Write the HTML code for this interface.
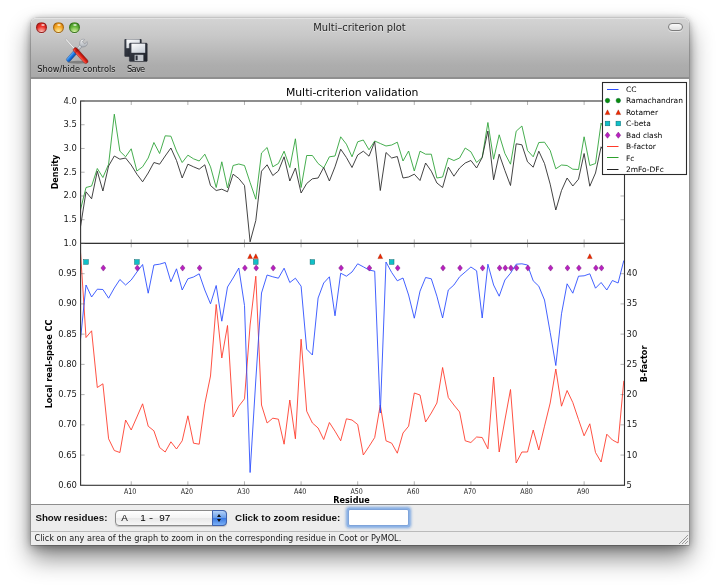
<!DOCTYPE html>
<html><head><meta charset="utf-8"><title>Multi-criterion plot</title>
<style>
html,body{margin:0;padding:0;background:#fff;}
body{width:720px;height:587px;position:relative;overflow:hidden;font-family:"Liberation Sans",sans-serif;}
.win{position:absolute;left:31px;top:18px;width:657.9px;height:527px;border-radius:5px 5px 0 0;background:#fff;
 box-shadow:0 .2px 0 .45px rgba(0,0,0,.27),0 13px 24px rgba(0,0,0,.47),0 3px 11px rgba(0,0,0,.28),0 0 6px rgba(0,0,0,.14);}
.tb{position:absolute;left:0;top:0;width:657.9px;height:61px;border-radius:5px 5px 0 0;
 background:linear-gradient(#d4d4d4,#c8c8c8 30%,#adadad 80%,#a9a9a9);box-shadow:inset 0 1px 0 rgba(255,255,255,.35);border-bottom:2px solid #8f8f8f;box-sizing:border-box;}
.title{position:absolute;left:0;top:3px;width:657px;text-align:center;font-family:"DejaVu Sans","Liberation Sans",sans-serif;font-size:9.9px;color:#222;line-height:14px;text-shadow:0 1px 0 rgba(255,255,255,.45);}
.tl{position:absolute;top:3.8px;width:11px;height:11px;border-radius:50%;box-sizing:border-box;box-shadow:0 .5px 0 rgba(255,255,255,.5);}
.tl.r{left:5.4px;background:radial-gradient(ellipse 75% 60% at 50% 100%,#ffc8c0 0%,rgba(255,180,170,0) 100%),radial-gradient(circle at 50% 55%,#f43c34 0%,#e62c24 50%,#b01a16 85%,#8c1210 100%);border:.5px solid rgba(110,20,20,.55);}
.tl.y{left:21.5px;background:radial-gradient(ellipse 75% 60% at 50% 100%,#fff2a8 0%,rgba(255,240,160,0) 100%),radial-gradient(circle at 50% 55%,#f8b030 0%,#f0a020 50%,#c87810 85%,#9a5808 100%);border:.5px solid rgba(120,70,10,.55);}
.tl.g{left:37.5px;background:radial-gradient(ellipse 75% 60% at 50% 100%,#dcf8a8 0%,rgba(210,245,160,0) 100%),radial-gradient(circle at 50% 55%,#70bc40 0%,#5cac34 50%,#3a8420 85%,#2a6412 100%);border:.5px solid rgba(40,90,20,.55);}
.tl:after{content:"";position:absolute;left:3.2px;top:.9px;width:4px;height:2.2px;border-radius:50%;background:radial-gradient(ellipse,rgba(255,255,255,.95),rgba(255,255,255,.2));}
.pill{position:absolute;left:636.8px;top:5px;width:15.5px;height:8px;border-radius:4px;border:1px solid #7c7c7c;background:linear-gradient(#fafafa,#e0e0e0);box-sizing:border-box;box-shadow:0 1px 0 rgba(255,255,255,.5);}
.tbl{position:absolute;top:46px;font-family:"DejaVu Sans","Liberation Sans",sans-serif;font-size:8.25px;color:#111;white-space:nowrap;line-height:11px;text-shadow:0 1px 0 rgba(255,255,255,.35);}
.ctrl{position:absolute;left:0;top:486px;width:657.9px;height:41px;background:#ededed;border-top:1px solid #8e8e8e;box-sizing:border-box;}
.stat{position:absolute;left:0;top:513px;width:657.9px;height:14px;border-top:1px solid #bababa;box-sizing:border-box;font-family:"DejaVu Sans","Liberation Sans",sans-serif;font-size:8.17px;line-height:12px;color:#1a1a1a;padding-left:3.6px;white-space:nowrap;}
.lbl{position:absolute;font-weight:bold;font-size:9.75px;color:#111;white-space:nowrap;line-height:14px;}
.pop{position:absolute;left:84px;top:492.3px;width:111.5px;height:15.5px;border-radius:4px;border:1px solid #8a8a8a;box-sizing:border-box;background:linear-gradient(#ffffff,#f4f4f4 48%,#e8e8e8 52%,#f6f6f6);font-size:9.9px;line-height:13.8px;white-space:pre;padding-left:7.5px;color:#000;box-shadow:0 1px 1px rgba(0,0,0,.18);}
.pop i{position:absolute;right:-1px;top:-1px;width:14.5px;height:15.5px;border-radius:0 4px 4px 0;border:1px solid #3f62ad;box-sizing:border-box;background:linear-gradient(#b4d2f8,#6a9eea 48%,#3a78e0 52%,#7ab0f6);}
.pop i:before{content:"";position:absolute;left:3.6px;top:2.6px;border:2.6px solid transparent;border-top:0;border-bottom:3px solid #111;}
.pop i:after{content:"";position:absolute;left:3.6px;top:7.8px;border:2.6px solid transparent;border-bottom:0;border-top:3px solid #111;}
.tf{position:absolute;left:317px;top:491.3px;width:60.5px;height:16.4px;box-sizing:border-box;background:#fff;border:1px solid #7fa4da;box-shadow:0 0 0 1.5px #8db3e6,0 0 2px 2.2px rgba(125,168,226,.5);border-radius:2px;}
.grip{position:absolute;right:1px;bottom:1px;width:9px;height:9px;background:linear-gradient(135deg,transparent 0 6.2px,#9a9a9a 6.2px 6.9px,transparent 6.9px 8.3px,#9a9a9a 8.3px 9px,transparent 9px 10.4px,#9a9a9a 10.4px 11.1px,transparent 11.1px);}
svg.plot{position:absolute;left:0;top:0;}
svg.ic{position:absolute;left:0;top:0;}
</style></head><body>
<div id="root" style="position:absolute;left:0;top:0;width:720px;height:587px;will-change:transform;">
<div class="win">
 <div class="tb">
  <div class="tl r"></div><div class="tl y"></div><div class="tl g"></div>
  <div class="title">Multi–criterion plot</div>
  <div class="pill"></div>
  <div class="tbl" style="left:6.2px">Show/hide controls</div>
  <div class="tbl" style="left:96px;letter-spacing:-.7px">Save</div>
 </div>
 <div class="ctrl"></div>
 <div class="lbl" style="left:4.4px;top:492.9px">Show residues:</div>
 <div class="pop"><span style="position:absolute;left:5.2px">A</span><span style="position:absolute;left:24.2px">1</span><span style="position:absolute;left:32.8px;transform:scaleX(1.25);transform-origin:0 0">-</span><span style="position:absolute;left:43.2px">97</span><i></i></div>
 <div class="lbl" style="left:204px;top:492.9px;font-size:9.9px">Click to zoom residue:</div>
 <div class="tf"></div>
 <div class="stat">Click on any area of the graph to zoom in on the corresponding residue in Coot or PyMOL.</div>
 <div class="grip"></div>
</div>
<svg class="ic" width="720" height="587" viewBox="0 0 720 587">
 <defs>
  <linearGradient id="gred" x1="0" y1="0" x2="1" y2="0"><stop offset="0" stop-color="#ff6a5a"/><stop offset=".5" stop-color="#e02418"/><stop offset="1" stop-color="#a01008"/></linearGradient>
  <linearGradient id="gblu" x1="0" y1="0" x2="1" y2="0"><stop offset="0" stop-color="#6ab4ff"/><stop offset=".5" stop-color="#1c78e0"/><stop offset="1" stop-color="#0a4aa8"/></linearGradient>
  <linearGradient id="gmet" x1="0" y1="0" x2="1" y2="1"><stop offset="0" stop-color="#ffffff"/><stop offset="1" stop-color="#9aa0a8"/></linearGradient>
  <linearGradient id="gflop" x1="0" y1="0" x2="1" y2="1"><stop offset="0" stop-color="#3c414c"/><stop offset="1" stop-color="#1c2028"/></linearGradient>
  <linearGradient id="glab" x1="0" y1="0" x2=".6" y2="1"><stop offset="0" stop-color="#ffffff"/><stop offset="1" stop-color="#ccd2da"/></linearGradient>
 </defs>
 <!-- tools icon -->
 <ellipse cx="78" cy="62.2" rx="10.5" ry="1.5" fill="rgba(0,0,0,.28)"/>
 <!-- wrench: blue handle lower-left, head upper-right -->
 <g transform="translate(77.6,49.6) rotate(42)">
  <rect x="-2.1" y="-.5" width="4.2" height="16" rx="2" fill="url(#gblu)" stroke="#0a3a88" stroke-width=".4"/>
  <rect x="-1.4" y="-6.5" width="2.8" height="6.6" fill="url(#gmet)" stroke="#70767e" stroke-width=".4"/>
  <path d="M-3.3 -7a3.5 3.5 0 0 1 1.7 -5.2v3.2h3.2v-3.2a3.5 3.5 0 0 1 1.7 5.2a3.5 3.5 0 0 1 -6.6 0z" fill="url(#gmet)" stroke="#70767e" stroke-width=".4"/>
 </g>
 <!-- screwdriver: red handle lower-right, shaft upper-left -->
 <g transform="translate(76.3,50.8) rotate(-42)">
  <rect x="-.7" y="-15.5" width="1.4" height="13" fill="#f4f4f4" stroke="#8a8a8a" stroke-width=".35"/>
  <rect x="-2.2" y="-3.4" width="4.4" height="19.6" rx="2" fill="url(#gred)" stroke="#7a0c06" stroke-width=".4"/>
  <path d="M-2.2 -.4h4.4M-2.2 .8h4.4" stroke="#6a0a06" stroke-width=".45"/>
 </g>
 <!-- save icon: two floppies -->
 <g>
  <rect x="124.4" y="39" width="17.2" height="17.8" rx="1" fill="url(#gflop)"/>
  <rect x="126.4" y="39.4" width="13.4" height="8.8" fill="url(#glab)"/>
  <rect x="129.3" y="43" width="18" height="18.6" rx="1.2" fill="url(#gflop)" stroke="#1c2028" stroke-width=".3"/>
  <rect x="131.4" y="43.6" width="13.8" height="9.2" fill="url(#glab)"/>
  <rect x="134.6" y="54.8" width="8.8" height="6.2" fill="#c4c8ce"/>
  <rect x="135.6" y="55.6" width="2" height="4.6" fill="#2b303a"/>
 </g>
</svg>
<svg class="plot" width="720" height="587" viewBox="0 0 720 587">
<defs><clipPath id="c1"><rect x="80.6" y="101.0" width="543.9" height="142.4"/></clipPath><clipPath id="c2"><rect x="80.6" y="243.4" width="543.9" height="241.9"/></clipPath></defs>
<g fill="none" stroke-width=".88" stroke-linejoin="round">
<polyline clip-path="url(#c1)" stroke="#2da338" points="80.3,210.5 86.0,187.5 91.6,186.0 97.3,168.5 102.9,177.5 108.6,164.2 114.3,114.2 119.9,151.2 125.6,156.8 131.2,148.8 136.9,171.0 142.6,166.8 148.2,158.0 153.9,142.5 159.6,153.5 165.2,135.8 170.9,136.2 176.5,151.0 182.2,162.5 187.9,155.2 193.5,158.8 199.2,161.0 204.8,154.2 210.5,166.8 216.2,187.5 221.8,161.8 227.5,188.0 233.1,165.5 238.8,164.0 244.5,165.5 250.1,182.5 255.8,199.2 261.5,153.0 267.1,147.5 272.8,166.8 278.4,163.5 284.1,151.2 289.8,167.5 295.4,138.8 301.1,187.5 306.7,155.5 312.4,155.5 318.1,163.5 323.7,168.0 329.4,156.8 335.0,156.0 340.7,136.8 346.4,144.2 352.0,156.8 357.7,141.8 363.3,140.0 369.0,149.8 374.7,141.0 380.3,143.5 386.0,146.0 391.7,145.0 397.3,142.2 403.0,161.0 408.6,151.0 414.3,171.0 420.0,151.2 425.6,154.2 431.3,154.2 436.9,178.0 442.6,177.0 448.3,158.0 453.9,160.5 459.6,158.0 465.2,148.0 470.9,151.8 476.6,162.5 482.2,157.5 487.9,122.5 493.6,159.2 499.2,134.8 504.9,153.5 510.5,164.2 516.2,131.2 521.9,126.0 527.5,150.5 533.2,156.8 538.8,142.5 544.5,142.2 550.2,150.5 555.8,168.8 561.5,165.0 567.1,165.5 572.8,169.2 578.5,169.5 584.1,136.8 589.8,165.5 595.5,163.5 601.1,123.0 606.8,135.5 612.4,148.0 618.1,143.0 623.8,140.5"/>
<polyline clip-path="url(#c1)" stroke="#2a2a2a" points="80.3,228.0 86.0,191.8 91.6,198.8 97.3,171.2 102.9,191.0 108.6,166.0 114.3,156.0 119.9,159.2 125.6,158.0 131.2,165.0 136.9,174.2 142.6,181.8 148.2,173.0 153.9,162.5 159.6,164.2 165.2,156.0 170.9,148.0 176.5,160.5 182.2,178.0 187.9,164.2 193.5,166.8 199.2,169.2 204.8,164.8 210.5,185.5 216.2,190.5 221.8,189.2 227.5,191.8 233.1,174.2 238.8,178.5 244.5,185.5 250.1,241.8 255.8,220.5 261.5,171.2 267.1,164.8 272.8,175.5 278.4,171.0 284.1,156.8 289.8,181.0 295.4,168.0 301.1,193.0 306.7,183.5 312.4,178.8 318.1,178.0 323.7,167.5 329.4,181.0 335.0,166.8 340.7,149.2 346.4,157.5 352.0,167.5 357.7,155.0 363.3,151.2 369.0,156.2 374.7,141.8 380.3,190.5 386.0,152.5 391.7,158.0 397.3,156.5 403.0,178.0 408.6,177.0 414.3,174.2 420.0,180.5 425.6,163.0 431.3,171.2 436.9,183.0 442.6,187.5 448.3,167.2 453.9,176.2 459.6,168.0 465.2,163.0 470.9,160.5 476.6,168.0 482.2,157.5 487.9,131.0 493.6,179.8 499.2,154.2 504.9,170.5 510.5,185.5 516.2,143.8 521.9,144.8 527.5,161.8 533.2,167.2 538.8,151.2 544.5,163.5 550.2,184.2 555.8,210.0 561.5,190.5 567.1,178.0 572.8,186.0 578.5,179.2 584.1,153.5 589.8,186.2 595.5,173.0 601.1,146.8 606.8,155.5 612.4,163.0 618.1,158.0 623.8,155.5"/>
<polyline clip-path="url(#c2)" stroke="#ff3a2a" points="80.3,249.0 86.0,337.5 91.6,330.8 97.3,387.5 102.9,383.8 108.6,438.8 114.3,450.5 119.9,452.5 125.6,420.0 131.2,430.0 136.9,417.0 142.6,403.8 148.2,426.2 153.9,430.8 159.6,447.5 165.2,452.0 170.9,441.8 176.5,449.0 182.2,440.8 187.9,415.8 193.5,443.2 199.2,444.2 204.8,403.8 210.5,376.0 216.2,304.5 221.8,358.0 227.5,325.5 233.1,417.0 238.8,406.2 244.5,398.8 250.1,325.0 255.8,276.2 261.5,405.0 267.1,423.0 272.8,418.2 278.4,419.2 284.1,444.2 289.8,400.0 295.4,438.8 301.1,339.2 306.7,411.2 312.4,423.0 318.1,428.0 323.7,439.5 329.4,422.5 335.0,431.2 340.7,440.8 346.4,418.8 352.0,420.0 357.7,424.5 363.3,455.0 369.0,446.5 374.7,437.5 380.3,405.0 386.0,440.8 391.7,443.2 397.3,453.2 403.0,433.0 408.6,426.2 414.3,393.0 420.0,395.0 425.6,422.0 431.3,413.0 436.9,403.0 442.6,367.5 448.3,397.5 453.9,405.0 459.6,412.0 465.2,440.8 470.9,442.5 476.6,437.0 482.2,437.5 487.9,448.8 493.6,377.0 499.2,452.0 504.9,420.0 510.5,389.5 516.2,463.0 521.9,452.0 527.5,452.0 533.2,430.0 538.8,450.0 544.5,426.2 550.2,403.0 555.8,369.0 561.5,406.2 567.1,390.5 572.8,402.5 578.5,419.5 584.1,435.8 589.8,423.8 595.5,452.5 601.1,462.0 606.8,434.2 612.4,440.0 618.1,443.0 623.8,380.8"/>
<polyline clip-path="url(#c2)" stroke="#2a4cff" points="80.3,341.2 86.0,285.0 91.6,297.0 97.3,289.2 102.9,289.5 108.6,298.2 114.3,288.0 119.9,279.5 125.6,285.0 131.2,280.0 136.9,272.0 142.6,264.5 148.2,293.2 153.9,265.0 159.6,264.2 165.2,262.5 170.9,281.8 176.5,268.8 182.2,290.0 187.9,278.8 193.5,277.0 199.2,273.8 204.8,290.0 210.5,303.8 216.2,285.5 221.8,321.2 227.5,287.0 233.1,278.0 238.8,268.0 244.5,305.5 250.1,472.5 255.8,380.0 261.5,293.0 267.1,275.0 272.8,276.8 278.4,278.2 284.1,268.2 289.8,282.5 295.4,278.2 301.1,286.2 306.7,349.2 312.4,355.0 318.1,298.0 323.7,283.0 329.4,276.8 335.0,315.8 340.7,273.2 346.4,276.2 352.0,272.0 357.7,263.8 363.3,266.8 369.0,270.0 374.7,271.2 380.3,413.0 386.0,262.0 391.7,272.5 397.3,280.8 403.0,278.0 408.6,295.0 414.3,318.2 420.0,291.2 425.6,277.5 431.3,278.8 436.9,296.2 442.6,318.0 448.3,290.0 453.9,285.0 459.6,276.8 465.2,272.0 470.9,267.0 476.6,270.8 482.2,318.0 487.9,264.2 493.6,285.0 499.2,296.2 504.9,280.0 510.5,273.2 516.2,264.2 521.9,263.8 527.5,265.0 533.2,280.8 538.8,286.2 544.5,300.0 550.2,332.5 555.8,365.5 561.5,313.8 567.1,283.8 572.8,293.2 578.5,276.2 584.1,275.8 589.8,273.8 595.5,288.2 601.1,282.5 606.8,290.0 612.4,280.5 618.1,283.0 623.8,260.5"/>
</g>
<path d="M250.1 253.8l2.4 4.8h-4.8z" fill="#f02800" stroke="#8a1a00" stroke-width=".35"/>
<path d="M255.8 253.8l2.4 4.8h-4.8z" fill="#f02800" stroke="#8a1a00" stroke-width=".35"/>
<path d="M380.3 253.8l2.4 4.8h-4.8z" fill="#f02800" stroke="#8a1a00" stroke-width=".35"/>
<path d="M589.8 253.8l2.4 4.8h-4.8z" fill="#f02800" stroke="#8a1a00" stroke-width=".35"/>
<rect x="83.7" y="259.7" width="4.6" height="4.6" fill="#10c0c8" stroke="#0a6a70" stroke-width=".5"/>
<rect x="134.6" y="259.7" width="4.6" height="4.6" fill="#10c0c8" stroke="#0a6a70" stroke-width=".5"/>
<rect x="253.5" y="259.7" width="4.6" height="4.6" fill="#10c0c8" stroke="#0a6a70" stroke-width=".5"/>
<rect x="310.1" y="259.7" width="4.6" height="4.6" fill="#10c0c8" stroke="#0a6a70" stroke-width=".5"/>
<rect x="389.4" y="259.7" width="4.6" height="4.6" fill="#10c0c8" stroke="#0a6a70" stroke-width=".5"/>
<path d="M103.3 264.9l2.4 3.1l-2.4 3.1l-2.4 -3.1z" fill="#b820c0" stroke="#6a1070" stroke-width=".4"/>
<path d="M137.3 264.9l2.4 3.1l-2.4 3.1l-2.4 -3.1z" fill="#b820c0" stroke="#6a1070" stroke-width=".4"/>
<path d="M182.6 264.9l2.4 3.1l-2.4 3.1l-2.4 -3.1z" fill="#b820c0" stroke="#6a1070" stroke-width=".4"/>
<path d="M199.6 264.9l2.4 3.1l-2.4 3.1l-2.4 -3.1z" fill="#b820c0" stroke="#6a1070" stroke-width=".4"/>
<path d="M244.9 264.9l2.4 3.1l-2.4 3.1l-2.4 -3.1z" fill="#b820c0" stroke="#6a1070" stroke-width=".4"/>
<path d="M256.2 264.9l2.4 3.1l-2.4 3.1l-2.4 -3.1z" fill="#b820c0" stroke="#6a1070" stroke-width=".4"/>
<path d="M273.2 264.9l2.4 3.1l-2.4 3.1l-2.4 -3.1z" fill="#b820c0" stroke="#6a1070" stroke-width=".4"/>
<path d="M341.1 264.9l2.4 3.1l-2.4 3.1l-2.4 -3.1z" fill="#b820c0" stroke="#6a1070" stroke-width=".4"/>
<path d="M369.4 264.9l2.4 3.1l-2.4 3.1l-2.4 -3.1z" fill="#b820c0" stroke="#6a1070" stroke-width=".4"/>
<path d="M397.7 264.9l2.4 3.1l-2.4 3.1l-2.4 -3.1z" fill="#b820c0" stroke="#6a1070" stroke-width=".4"/>
<path d="M443.0 264.9l2.4 3.1l-2.4 3.1l-2.4 -3.1z" fill="#b820c0" stroke="#6a1070" stroke-width=".4"/>
<path d="M460.0 264.9l2.4 3.1l-2.4 3.1l-2.4 -3.1z" fill="#b820c0" stroke="#6a1070" stroke-width=".4"/>
<path d="M482.6 264.9l2.4 3.1l-2.4 3.1l-2.4 -3.1z" fill="#b820c0" stroke="#6a1070" stroke-width=".4"/>
<path d="M499.6 264.9l2.4 3.1l-2.4 3.1l-2.4 -3.1z" fill="#b820c0" stroke="#6a1070" stroke-width=".4"/>
<path d="M505.3 264.9l2.4 3.1l-2.4 3.1l-2.4 -3.1z" fill="#b820c0" stroke="#6a1070" stroke-width=".4"/>
<path d="M510.9 264.9l2.4 3.1l-2.4 3.1l-2.4 -3.1z" fill="#b820c0" stroke="#6a1070" stroke-width=".4"/>
<path d="M516.6 264.9l2.4 3.1l-2.4 3.1l-2.4 -3.1z" fill="#b820c0" stroke="#6a1070" stroke-width=".4"/>
<path d="M527.9 264.9l2.4 3.1l-2.4 3.1l-2.4 -3.1z" fill="#b820c0" stroke="#6a1070" stroke-width=".4"/>
<path d="M550.6 264.9l2.4 3.1l-2.4 3.1l-2.4 -3.1z" fill="#b820c0" stroke="#6a1070" stroke-width=".4"/>
<path d="M567.5 264.9l2.4 3.1l-2.4 3.1l-2.4 -3.1z" fill="#b820c0" stroke="#6a1070" stroke-width=".4"/>
<path d="M578.9 264.9l2.4 3.1l-2.4 3.1l-2.4 -3.1z" fill="#b820c0" stroke="#6a1070" stroke-width=".4"/>
<path d="M595.9 264.9l2.4 3.1l-2.4 3.1l-2.4 -3.1z" fill="#b820c0" stroke="#6a1070" stroke-width=".4"/>
<path d="M601.5 264.9l2.4 3.1l-2.4 3.1l-2.4 -3.1z" fill="#b820c0" stroke="#6a1070" stroke-width=".4"/>
<g fill="none" stroke="#333" stroke-width="1.1">
<rect x="80.6" y="101.0" width="543.9" height="142.4"/>
<rect x="80.6" y="243.4" width="543.9" height="241.9"/>
<path stroke="#555" stroke-width=".45" d="M131.25 101.0v4M131.25 243.4v-4M131.25 243.4v4M131.25 485.3v-4M187.86 101.0v4M187.86 243.4v-4M187.86 243.4v4M187.86 485.3v-4M244.47 101.0v4M244.47 243.4v-4M244.47 243.4v4M244.47 485.3v-4M301.08 101.0v4M301.08 243.4v-4M301.08 243.4v4M301.08 485.3v-4M357.69 101.0v4M357.69 243.4v-4M357.69 243.4v4M357.69 485.3v-4M414.30 101.0v4M414.30 243.4v-4M414.30 243.4v4M414.30 485.3v-4M470.91 101.0v4M470.91 243.4v-4M470.91 243.4v4M470.91 485.3v-4M527.52 101.0v4M527.52 243.4v-4M527.52 243.4v4M527.52 485.3v-4M584.13 101.0v4M584.13 243.4v-4M584.13 243.4v4M584.13 485.3v-4M80.6 101.00h4M624.5 101.00h-4M80.6 124.74h4M624.5 124.74h-4M80.6 148.48h4M624.5 148.48h-4M80.6 172.22h4M624.5 172.22h-4M80.6 195.97h4M624.5 195.97h-4M80.6 219.71h4M624.5 219.71h-4M80.6 243.45h4M624.5 243.45h-4M80.6 243.45h4M624.5 243.45h-4M80.6 273.68h4M624.5 273.68h-4M80.6 303.91h4M624.5 303.91h-4M80.6 334.14h4M624.5 334.14h-4M80.6 364.38h4M624.5 364.38h-4M80.6 394.61h4M624.5 394.61h-4M80.6 424.84h4M624.5 424.84h-4M80.6 455.07h4M624.5 455.07h-4M80.6 485.30h4M624.5 485.30h-4"/>
</g>
<g font-family="'DejaVu Sans','Liberation Sans',sans-serif" fill="#000">
<text x="352.2" y="96" font-size="10.85" text-anchor="middle">Multi-criterion validation</text>
<text x="63.52" y="104.30" font-size="9.0" fill="#1a1a1a" textLength="13.38" lengthAdjust="spacingAndGlyphs">4.0</text>
<text x="63.52" y="127.24" font-size="9.0" fill="#1a1a1a" textLength="13.38" lengthAdjust="spacingAndGlyphs">3.5</text>
<text x="63.52" y="150.98" font-size="9.0" fill="#1a1a1a" textLength="13.38" lengthAdjust="spacingAndGlyphs">3.0</text>
<text x="63.52" y="174.72" font-size="9.0" fill="#1a1a1a" textLength="13.38" lengthAdjust="spacingAndGlyphs">2.5</text>
<text x="63.52" y="198.47" font-size="9.0" fill="#1a1a1a" textLength="13.38" lengthAdjust="spacingAndGlyphs">2.0</text>
<text x="63.52" y="222.21" font-size="9.0" fill="#1a1a1a" textLength="13.38" lengthAdjust="spacingAndGlyphs">1.5</text>
<text x="63.52" y="245.95" font-size="9.0" fill="#1a1a1a" textLength="13.38" lengthAdjust="spacingAndGlyphs">1.0</text>
<text x="58.17" y="276.18" font-size="9.0" fill="#1a1a1a" textLength="18.73" lengthAdjust="spacingAndGlyphs">0.95</text>
<text x="626.60" y="276.18" font-size="9.0" fill="#1a1a1a" textLength="10.70" lengthAdjust="spacingAndGlyphs">40</text>
<text x="58.17" y="306.41" font-size="9.0" fill="#1a1a1a" textLength="18.73" lengthAdjust="spacingAndGlyphs">0.90</text>
<text x="626.60" y="306.41" font-size="9.0" fill="#1a1a1a" textLength="10.70" lengthAdjust="spacingAndGlyphs">35</text>
<text x="58.17" y="336.64" font-size="9.0" fill="#1a1a1a" textLength="18.73" lengthAdjust="spacingAndGlyphs">0.85</text>
<text x="626.60" y="336.64" font-size="9.0" fill="#1a1a1a" textLength="10.70" lengthAdjust="spacingAndGlyphs">30</text>
<text x="58.17" y="366.88" font-size="9.0" fill="#1a1a1a" textLength="18.73" lengthAdjust="spacingAndGlyphs">0.80</text>
<text x="626.60" y="366.88" font-size="9.0" fill="#1a1a1a" textLength="10.70" lengthAdjust="spacingAndGlyphs">25</text>
<text x="58.17" y="397.11" font-size="9.0" fill="#1a1a1a" textLength="18.73" lengthAdjust="spacingAndGlyphs">0.75</text>
<text x="626.60" y="397.11" font-size="9.0" fill="#1a1a1a" textLength="10.70" lengthAdjust="spacingAndGlyphs">20</text>
<text x="58.17" y="427.34" font-size="9.0" fill="#1a1a1a" textLength="18.73" lengthAdjust="spacingAndGlyphs">0.70</text>
<text x="626.60" y="427.34" font-size="9.0" fill="#1a1a1a" textLength="10.70" lengthAdjust="spacingAndGlyphs">15</text>
<text x="58.17" y="457.57" font-size="9.0" fill="#1a1a1a" textLength="18.73" lengthAdjust="spacingAndGlyphs">0.65</text>
<text x="626.60" y="457.57" font-size="9.0" fill="#1a1a1a" textLength="10.70" lengthAdjust="spacingAndGlyphs">10</text>
<text x="58.17" y="487.80" font-size="9.0" fill="#1a1a1a" textLength="18.73" lengthAdjust="spacingAndGlyphs">0.60</text>
<text x="626.60" y="487.80" font-size="9.0" fill="#1a1a1a" textLength="5.35" lengthAdjust="spacingAndGlyphs">5</text>
<text x="124.0" y="493.7" font-size="7.8" fill="#222" textLength="12.4" lengthAdjust="spacingAndGlyphs">A10</text>
<text x="180.7" y="493.7" font-size="7.8" fill="#222" textLength="12.4" lengthAdjust="spacingAndGlyphs">A20</text>
<text x="237.3" y="493.7" font-size="7.8" fill="#222" textLength="12.4" lengthAdjust="spacingAndGlyphs">A30</text>
<text x="293.9" y="493.7" font-size="7.8" fill="#222" textLength="12.4" lengthAdjust="spacingAndGlyphs">A40</text>
<text x="350.5" y="493.7" font-size="7.8" fill="#222" textLength="12.4" lengthAdjust="spacingAndGlyphs">A50</text>
<text x="407.1" y="493.7" font-size="7.8" fill="#222" textLength="12.4" lengthAdjust="spacingAndGlyphs">A60</text>
<text x="463.7" y="493.7" font-size="7.8" fill="#222" textLength="12.4" lengthAdjust="spacingAndGlyphs">A70</text>
<text x="520.3" y="493.7" font-size="7.8" fill="#222" textLength="12.4" lengthAdjust="spacingAndGlyphs">A80</text>
<text x="576.9" y="493.7" font-size="7.8" fill="#222" textLength="12.4" lengthAdjust="spacingAndGlyphs">A90</text>
<text x="351.5" y="502.5" font-size="8.1" font-weight="bold" text-anchor="middle">Residue</text>
<text transform="translate(57.5,172) rotate(-90)" font-size="8.1" font-weight="bold" text-anchor="middle">Density</text>
<text transform="translate(52.2,364) rotate(-90)" font-size="8.1" font-weight="bold" text-anchor="middle">Local real-space CC</text>
<text transform="translate(647,364) rotate(-90)" font-size="8.1" font-weight="bold" text-anchor="middle">B-factor</text>
<rect x="602.5" y="82.5" width="84" height="92" fill="#fff" stroke="#2a2a2a" stroke-width="1.1"/>
<text x="626" y="92.0" font-size="7.5">CC</text>
<text x="626" y="103.4" font-size="7.5">Ramachandran</text>
<text x="626" y="114.8" font-size="7.5">Rotamer</text>
<text x="626" y="126.3" font-size="7.5">C-beta</text>
<text x="626" y="137.7" font-size="7.5">Bad clash</text>
<text x="626" y="149.1" font-size="7.5">B-factor</text>
<text x="626" y="160.5" font-size="7.5">Fc</text>
<text x="626" y="171.9" font-size="7.5">2mFo-DFc</text>
<path d="M607 89.5h11.5" stroke="#2a4cff" stroke-width="1" fill="none"/>
<path d="M607 146.5h11.5" stroke="#ff3a2a" stroke-width="1" fill="none"/>
<path d="M607 157.5h11.5" stroke="#2ca02c" stroke-width="1" fill="none"/>
<path d="M607 169.5h11.5" stroke="#222" stroke-width="1" fill="none"/>
<circle cx="607.5" cy="100.6" r="2.3" fill="#0a8a0a" stroke="#064" stroke-width=".4"/>
<path d="M607.5 109.8l2.4 4.8h-4.8z" fill="#f02800" stroke="#8a1a00" stroke-width=".35"/>
<rect x="605.2" y="121.2" width="4.6" height="4.6" fill="#10c0c8" stroke="#0a6a70" stroke-width=".5"/>
<path d="M607.5 132.1l2.4 3.1l-2.4 3.1l-2.4 -3.1z" fill="#b820c0" stroke="#6a1070" stroke-width=".4"/>
<circle cx="618.3" cy="100.6" r="2.3" fill="#0a8a0a" stroke="#064" stroke-width=".4"/>
<path d="M618.3 109.8l2.4 4.8h-4.8z" fill="#f02800" stroke="#8a1a00" stroke-width=".35"/>
<rect x="616.0" y="121.2" width="4.6" height="4.6" fill="#10c0c8" stroke="#0a6a70" stroke-width=".5"/>
<path d="M618.3 132.1l2.4 3.1l-2.4 3.1l-2.4 -3.1z" fill="#b820c0" stroke="#6a1070" stroke-width=".4"/>
</g>
</svg>
</div>
</body></html>
